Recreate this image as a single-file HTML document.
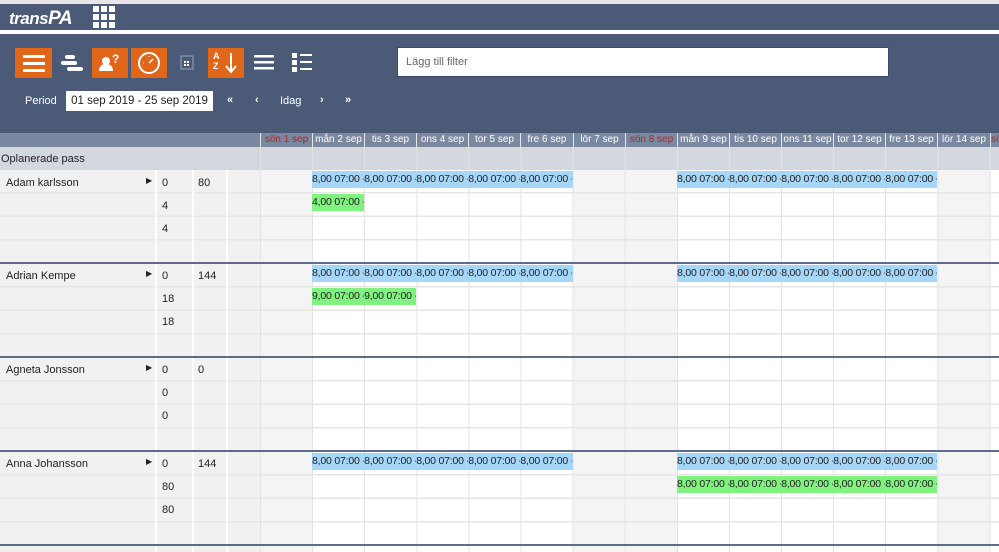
<!DOCTYPE html>
<html><head><meta charset="utf-8"><style>
*{margin:0;padding:0;box-sizing:border-box}
body{width:999px;height:552px;overflow:hidden;position:relative;background:#fff;font-family:"Liberation Sans",sans-serif;font-size:11px;color:#222}
.a{position:absolute}
.ob{position:absolute;top:48px;height:30px;background:#e0661a}
.hd{position:absolute;top:133px;height:14px;background:#7b88a1;color:#fff;font-size:10px;line-height:14px;text-align:center;border-left:1px solid #e8e8e8;white-space:nowrap;overflow:hidden}
.hd.r{color:#a52a2a}
.b{position:absolute;height:17px;background:#a6d6f8;font-size:10.5px;line-height:17px;white-space:nowrap;overflow:hidden;display:flex}
.b span{display:block;width:52.1px;flex:none;overflow:hidden;white-space:nowrap;letter-spacing:-0.2px}
.g{background:#7ff27f}
.sep{position:absolute;left:0;width:999px;height:2px;background:#5d6d88}
.t{position:absolute;font-size:11px}
</style></head><body>
<div class="a" style="left:0;top:0;width:999px;height:4px;background:#e6e6e6"></div>
<div class="a" style="left:0;top:4px;width:999px;height:129px;background:#4a5a77"></div>
<div class="a" style="left:0;top:30px;width:999px;height:4px;background:#fff"></div>
<div class="a" style="left:9px;top:8px;color:#fff;font-size:17px;font-style:italic;font-weight:bold;letter-spacing:-0.5px">trans<span style="font-size:19px">PA</span></div>
<svg class="a" style="left:93px;top:6px" width="24" height="22"><g fill="#fff"><rect x="0" y="0" width="6" height="6"/><rect x="8" y="0" width="6" height="6"/><rect x="16" y="0" width="6" height="6"/><rect x="0" y="8" width="6" height="6"/><rect x="8" y="8" width="6" height="6"/><rect x="16" y="8" width="6" height="6"/><rect x="0" y="16" width="6" height="6"/><rect x="8" y="16" width="6" height="6"/><rect x="16" y="16" width="6" height="6"/></g></svg>
<div class="ob" style="left:15px;width:37px"></div>
<svg class="a" style="left:23px;top:52px" width="22" height="22"><g fill="#fff"><rect x="0" y="3" width="22" height="3"/><rect x="0" y="10" width="22" height="3"/><rect x="0" y="17" width="22" height="3"/></g></svg>
<svg class="a" style="left:61px;top:54px" width="22" height="18"><g fill="#fff"><rect x="4" y="1" width="10" height="4" rx="2"/><rect x="0" y="7" width="16" height="4" rx="2"/><rect x="6" y="13" width="16" height="4" rx="2"/></g></svg>
<div class="ob" style="left:92px;width:36px"></div>
<svg class="a" style="left:98px;top:52px" width="24" height="22"><g fill="#fff"><circle cx="8" cy="9" r="4"/><path d="M1 19c0-5 3-7 7-7s7 2 7 7z"/><text x="14" y="11" font-size="12" font-weight="bold" font-family="Liberation Sans">?</text></g></svg>
<div class="ob" style="left:131px;width:36px"></div>
<svg class="a" style="left:137px;top:51px" width="24" height="24"><circle cx="12" cy="12" r="10" fill="none" stroke="#fff" stroke-width="2"/><path d="M12 12l4-4" stroke="#fff" stroke-width="1.5"/><path d="M6 12h1M12 5v1" stroke="#fff"/></svg>
<svg class="a" style="left:178px;top:53px" width="18" height="20"><g stroke="#9aa4b8" fill="none"><rect x="3" y="3" width="12" height="13"/></g><g fill="#fff"><rect x="6" y="8" width="2" height="2"/><rect x="9" y="8" width="2" height="2"/><rect x="6" y="11" width="2" height="2"/><rect x="9" y="11" width="2" height="2"/></g></svg>
<div class="ob" style="left:208px;width:36px"></div>
<div class="a" style="left:213px;top:51px;color:#fff;font-size:9px;font-weight:bold;line-height:10px">A<br>Z</div>
<svg class="a" style="left:224px;top:51px" width="14" height="24"><path d="M7 2v19M2 15l5 6 5-6" stroke="#fff" stroke-width="2" fill="none"/></svg>
<svg class="a" style="left:254px;top:53px" width="22" height="18"><g fill="#fff"><rect x="0" y="2" width="20" height="2.5"/><rect x="0" y="8" width="20" height="2.5"/><rect x="0" y="14" width="20" height="2.5"/></g></svg>
<svg class="a" style="left:292px;top:52px" width="22" height="20"><g fill="#fff"><rect x="0" y="1" width="5" height="5"/><rect x="0" y="8" width="5" height="5"/><rect x="0" y="15" width="5" height="5"/><rect x="8" y="2" width="12" height="2"/><rect x="8" y="9" width="12" height="2"/><rect x="8" y="16" width="12" height="2"/></g></svg>
<div class="a" style="left:397px;top:47px;width:492px;height:30px;background:#fff;border:1px solid #3a4a66;color:#666;font-size:11px;line-height:28px;padding-left:8px">Lägg till filter</div>
<div class="a" style="left:25px;top:95px;color:#fff;font-size:11px">Period</div>
<div class="a" style="left:66px;top:91px;width:147px;height:20px;background:#fff;font-size:11.5px;line-height:20px;text-align:center">01 sep 2019 - 25 sep 2019</div>
<div class="a" style="left:227px;top:94px;color:#fff;font-size:11px;font-weight:bold">«</div>
<div class="a" style="left:255px;top:94px;color:#fff;font-size:11px;font-weight:bold">‹</div>
<div class="a" style="left:280px;top:95px;color:#fff;font-size:11px">Idag</div>
<div class="a" style="left:320px;top:94px;color:#fff;font-size:11px;font-weight:bold">›</div>
<div class="a" style="left:345px;top:94px;color:#fff;font-size:11px;font-weight:bold">»</div>

<div class="a" style="left:0;top:133px;width:260px;height:14px;background:#7b88a1"></div>
<div class="a" style="left:0;top:147px;width:999px;height:23px;background:#d3d7de"></div>
<div class="t" style="left:1px;top:153px">Oplanerade pass</div>
<div class="a" style="left:0;top:170px;width:260px;height:382px;background:#f1f1f1"></div>
<div class="a" style="left:260px;top:170px;width:52px;height:382px;background:#f4f4f4"></div>
<div class="a" style="left:573px;top:170px;width:104px;height:382px;background:#f4f4f4"></div>
<div class="a" style="left:937px;top:170px;width:53px;height:382px;background:#f4f4f4"></div>
<div class="a" style="left:0;top:170px;width:999px;height:382px;background:repeating-linear-gradient(to bottom,transparent 0,transparent 22px,#e6e6e6 22px,#e6e6e6 23.5px)"></div>
<div class="a" style="left:155px;top:170px;width:2px;height:382px;background:#fff"></div>
<div class="a" style="left:192px;top:170px;width:2px;height:382px;background:#fff"></div>
<div class="a" style="left:226px;top:170px;width:2px;height:382px;background:#fff"></div>
<div class="a" style="left:260px;top:147px;width:739px;height:405px;background:repeating-linear-gradient(to right,#e3e3e3 0,#e3e3e3 1px,transparent 1px,transparent 52.1px)"></div>

<div class="hd r" style="left:260px;width:52px">sön 1 sep</div>
<div class="hd" style="left:312px;width:52px">mån 2 sep</div>
<div class="hd" style="left:364px;width:52px">tis 3 sep</div>
<div class="hd" style="left:416px;width:52px">ons 4 sep</div>
<div class="hd" style="left:468px;width:52px">tor 5 sep</div>
<div class="hd" style="left:520px;width:53px">fre 6 sep</div>
<div class="hd" style="left:573px;width:52px">lör 7 sep</div>
<div class="hd r" style="left:625px;width:52px">sön 8 sep</div>
<div class="hd" style="left:677px;width:52px">mån 9 sep</div>
<div class="hd" style="left:729px;width:52px">tis 10 sep</div>
<div class="hd" style="left:781px;width:52px">ons 11 sep</div>
<div class="hd" style="left:833px;width:52px">tor 12 sep</div>
<div class="hd" style="left:885px;width:52px">fre 13 sep</div>
<div class="hd" style="left:937px;width:53px">lör 14 sep</div>
<div class="hd r" style="left:990px;width:20px;text-align:left">sö</div>

<div class="sep" style="top:262px"></div>
<div class="sep" style="top:356px"></div>
<div class="sep" style="top:450px"></div>
<div class="sep" style="top:544px"></div>

<div class="t" style="left:6px;top:177px">Adam karlsson</div><div class="t" style="left:146px;top:176px;font-size:8px">▶</div>
<div class="t" style="left:162px;top:177px">0</div><div class="t" style="left:198px;top:177px">80</div>
<div class="t" style="left:162px;top:200px">4</div><div class="t" style="left:162px;top:223px">4</div>

<div class="t" style="left:6px;top:270px">Adrian Kempe</div><div class="t" style="left:146px;top:269px;font-size:8px">▶</div>
<div class="t" style="left:162px;top:270px">0</div><div class="t" style="left:198px;top:270px">144</div>
<div class="t" style="left:162px;top:293px">18</div><div class="t" style="left:162px;top:316px">18</div>

<div class="t" style="left:6px;top:364px">Agneta Jonsson</div><div class="t" style="left:146px;top:363px;font-size:8px">▶</div>
<div class="t" style="left:162px;top:364px">0</div><div class="t" style="left:198px;top:364px">0</div>
<div class="t" style="left:162px;top:387px">0</div><div class="t" style="left:162px;top:410px">0</div>

<div class="t" style="left:6px;top:458px">Anna Johansson</div><div class="t" style="left:146px;top:457px;font-size:8px">▶</div>
<div class="t" style="left:162px;top:458px">0</div><div class="t" style="left:198px;top:458px">144</div>
<div class="t" style="left:162px;top:481px">80</div><div class="t" style="left:162px;top:504px">80</div>

<div class="b" style="left:312px;top:171px;width:261px"><span>8,00 07:00 -</span><span>8,00 07:00 -</span><span>8,00 07:00 -</span><span>8,00 07:00 -</span><span>8,00 07:00 -</span></div>
<div class="b" style="left:677px;top:171px;width:260px"><span>8,00 07:00 -</span><span>8,00 07:00 -</span><span>8,00 07:00 -</span><span>8,00 07:00 -</span><span>8,00 07:00 -</span></div>
<div class="b g" style="left:312px;top:194px;width:52px"><span>4,00 07:00 -</span></div>

<div class="b" style="left:312px;top:265px;width:261px"><span>8,00 07:00 -</span><span>8,00 07:00 -</span><span>8,00 07:00 -</span><span>8,00 07:00 -</span><span>8,00 07:00 -</span></div>
<div class="b" style="left:677px;top:265px;width:260px"><span>8,00 07:00 -</span><span>8,00 07:00 -</span><span>8,00 07:00 -</span><span>8,00 07:00 -</span><span>8,00 07:00 -</span></div>
<div class="b g" style="left:312px;top:288px;width:104px"><span>9,00 07:00 -</span><span>9,00 07:00 -</span></div>

<div class="b" style="left:312px;top:453px;width:261px"><span>8,00 07:00 -</span><span>8,00 07:00 -</span><span>8,00 07:00 -</span><span>8,00 07:00 -</span><span>8,00 07:00 -</span></div>
<div class="b" style="left:677px;top:453px;width:260px"><span>8,00 07:00 -</span><span>8,00 07:00 -</span><span>8,00 07:00 -</span><span>8,00 07:00 -</span><span>8,00 07:00 -</span></div>
<div class="b g" style="left:677px;top:476px;width:260px"><span>8,00 07:00 -</span><span>8,00 07:00 -</span><span>8,00 07:00 -</span><span>8,00 07:00 -</span><span>8,00 07:00 -</span></div>
</body></html>
